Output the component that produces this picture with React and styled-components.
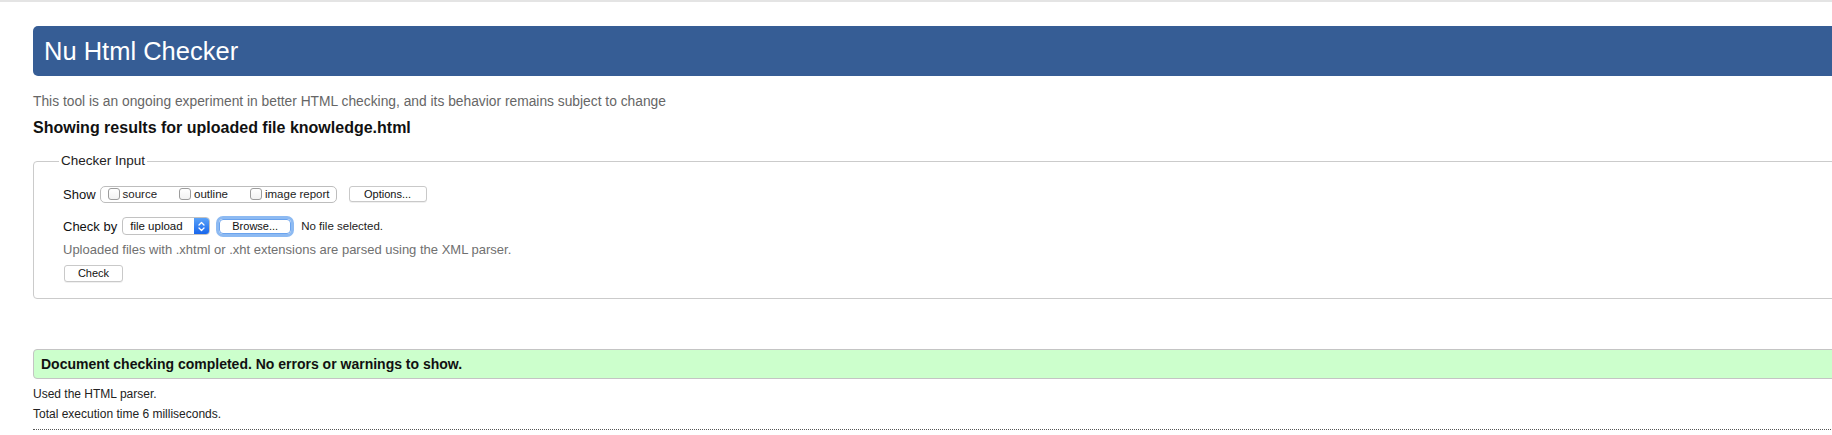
import React from 'react'
import styled, { createGlobalStyle } from 'styled-components'

const GlobalStyle = createGlobalStyle`
  html, body {
    margin: 0;
    padding: 0;
    overflow: hidden;
    background: #fff;
  }
  body {
    font-family: 'Liberation Sans', Arial, Helvetica, sans-serif;
    color: #222;
  }
`;

const Page = styled.div`
  border-top: 2px solid #e4e4e4;
  padding-left: 33px;
  width: 1880px;
`;

const Header = styled.header`
  margin-top: 24px;
  height: 50px;
  background: #365d95;
  border-radius: 5px;
  display: flex;
  align-items: center;
  padding-left: 11px;
`;

const Title = styled.h1`
  margin: 0;
  font-size: 25.5px;
  font-weight: normal;
  color: #fff;
  line-height: 30px;
`;

const Intro = styled.p`
  margin: 18px 0 0;
  font-size: 13.8px;
  line-height: 16px;
  color: #666;
`;

const Heading = styled.h2`
  margin: 9px 0 0;
  font-size: 16px;
  line-height: 18px;
  font-weight: bold;
  color: #111;
`;

const Fieldset = styled.fieldset`
  margin: 16px 0 0;
  border: 1px solid #cbcbcb;
  border-radius: 4px;
  padding: 15px 0 15px 29px;
  min-width: 0;
`;

const Legend = styled.legend`
  font-size: 13.5px;
  line-height: 16px;
  padding: 0 2px;
  margin-left: -4px;
  color: #222;
`;

const Row = styled.div`
  display: flex;
  align-items: center;
  height: 20px;
  margin-top: ${p => p.$gap || 0}px;
`;

const Label = styled.span`
  font-size: 13px;
  color: #111;
  margin-right: ${p => p.$space}px;
`;

const CheckGroup = styled.div`
  display: flex;
  align-items: center;
  height: 15px;
  border: 1px solid #bdbdbd;
  border-radius: 5px;
  padding: 0 6px 0 7px;
  gap: 22px;
`;

const CheckItem = styled.label`
  display: flex;
  align-items: center;
  gap: 3px;
  font-size: 11.5px;
  color: #222;
`;

const Box = styled.span`
  display: inline-block;
  width: 10px;
  height: 10px;
  border: 1px solid #9c9c9c;
  border-radius: 3px;
  background: linear-gradient(#fff, #f2f2f2);
`;

const Button = styled.span`
  display: inline-flex;
  align-items: center;
  justify-content: center;
  box-sizing: border-box;
  width: ${p => p.$w}px;
  height: ${p => p.$h || 16}px;
  margin-left: ${p => p.$ml || 0}px;
  border: 1px solid #c9c9c9;
  border-radius: 3px;
  background: #fff;
  box-shadow: 0 1px 0 rgba(0, 0, 0, 0.06);
  font-size: 11px;
  color: #111;
  ${p => p.$focus && `
    outline: 3px solid #8dbaf2;
    outline-offset: 0;
    border-color: #6aa3ee;
    border-radius: 4px;
  `}
`;

const Select = styled.span`
  display: inline-flex;
  align-items: stretch;
  box-sizing: border-box;
  width: 88px;
  height: 18px;
  margin-left: 5px;
  border: 1px solid #c2c2c2;
  border-radius: 4px;
  background: #fff;
  overflow: hidden;
  font-size: 11.5px;
  color: #111;
`;

const SelectText = styled.span`
  flex: 1;
  display: flex;
  align-items: center;
  padding-left: 7px;
`;

const SelectArrow = styled.span`
  width: 15px;
  display: flex;
  align-items: center;
  justify-content: center;
  background: linear-gradient(#5aa2f8, #1866ec);
`;

const FileNote = styled.span`
  margin-left: 10px;
  font-size: 11.5px;
  color: #222;
`;

const Hint = styled.p`
  margin: 6px 0 0;
  font-size: 13px;
  line-height: 16px;
  color: #707070;
`;

const Success = styled.div`
  margin-top: 50px;
  height: 28px;
  display: flex;
  align-items: center;
  padding-left: 7px;
  background: #ccffcc;
  border: 1px solid #c4c4c4;
  border-radius: 4px 0 0 4px;
  font-size: 14px;
  font-weight: bold;
  color: #111;
`;

const Detail = styled.p`
  margin: ${p => p.$top}px 0 0;
  font-size: 12px;
  line-height: 15px;
  color: #222;
`;

const Dotted = styled.div`
  margin-top: 7px;
  border-top: 1px dotted #555;
`;

const Chevrons = () => (
  <svg width="7" height="11" viewBox="0 0 7 11" fill="none" stroke="#fff" strokeWidth="1.3" strokeLinecap="round" strokeLinejoin="round">
    <path d="M1 4 L3.5 1.5 L6 4" />
    <path d="M1 7 L3.5 9.5 L6 7" />
  </svg>
);

const options = ['source', 'outline', 'image report'];

export default function App() {
  return (
    <>
      <GlobalStyle />
      <Page>
        <Header>
          <Title>Nu Html Checker</Title>
        </Header>
        <Intro>This tool is an ongoing experiment in better HTML checking, and its behavior remains subject to change</Intro>
        <Heading>Showing results for uploaded file knowledge.html</Heading>

        <Fieldset>
          <Legend>Checker Input</Legend>
          <Row>
            <Label $space={4}>Show</Label>
            <CheckGroup>
              {options.map(o => (
                <CheckItem key={o}><Box />{o}</CheckItem>
              ))}
            </CheckGroup>
            <Button $w={78} $ml={12}>Options...</Button>
          </Row>
          <Row $gap={12}>
            <Label $space={0}>Check by</Label>
            <Select>
              <SelectText>file upload</SelectText>
              <SelectArrow><Chevrons /></SelectArrow>
            </Select>
            <Button $w={72} $h={15} $ml={9} $focus>Browse...</Button>
            <FileNote>No file selected.</FileNote>
          </Row>
          <Hint>Uploaded files with .xhtml or .xht extensions are parsed using the XML parser.</Hint>
          <Row $gap={5}>
            <Button $w={59} $h={17} $ml={1}>Check</Button>
          </Row>
        </Fieldset>

        <Success>Document checking completed. No errors or warnings to show.</Success>
        <Detail $top={8}>Used the HTML parser.</Detail>
        <Detail $top={5}>Total execution time 6 milliseconds.</Detail>
        <Dotted />
      </Page>
    </>
  )
}
